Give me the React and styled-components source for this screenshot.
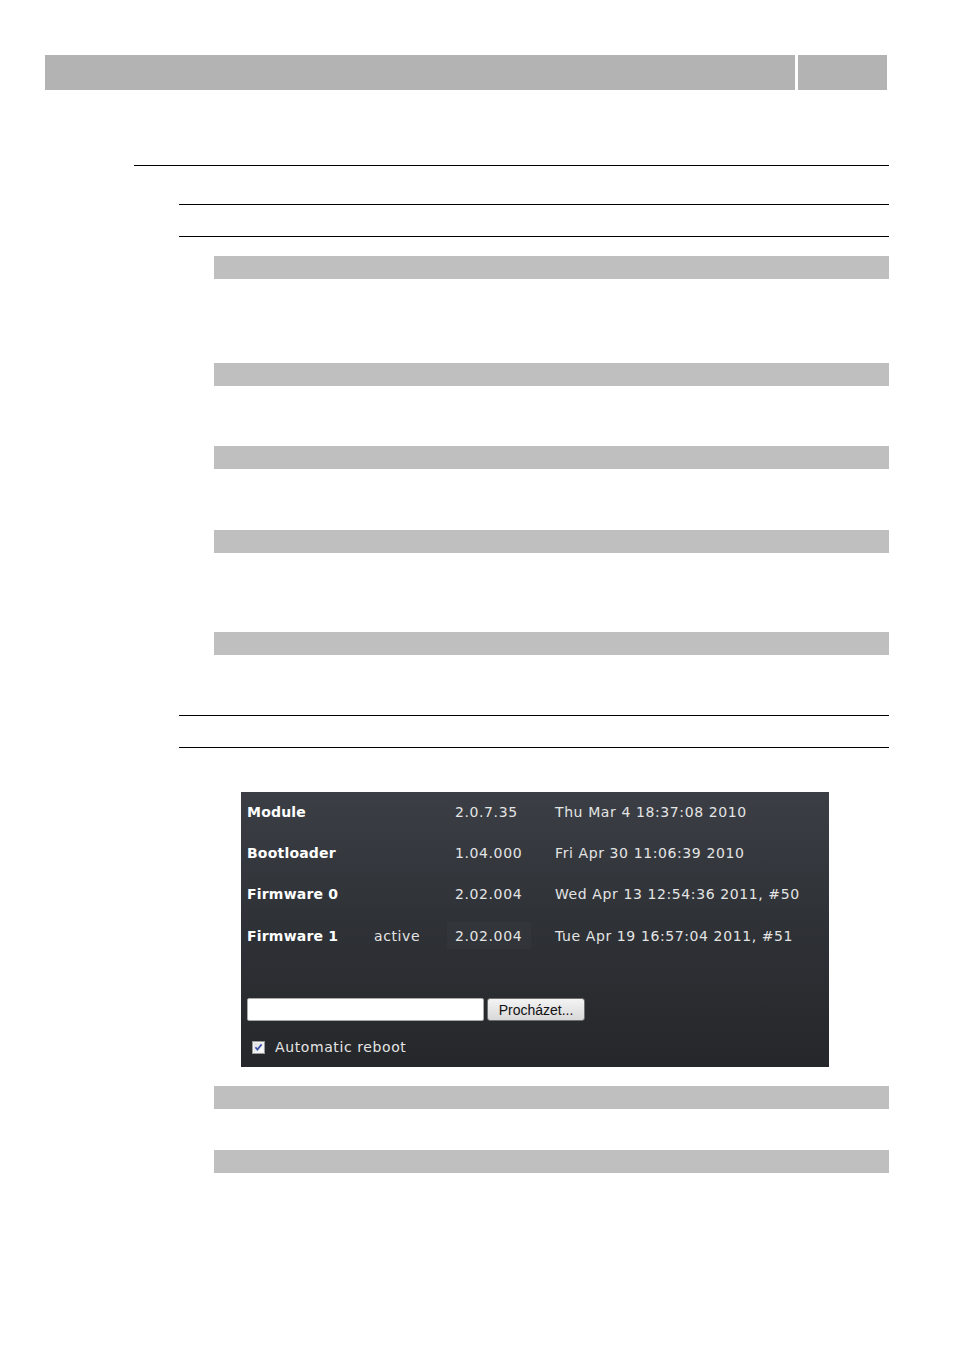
import React from "react";
import styled, { createGlobalStyle } from "styled-components";

const Global = createGlobalStyle`
  html, body { margin: 0; padding: 0; background: #ffffff; }
  body { font-family: "DejaVu Sans", Verdana, sans-serif; }
`;

const Page = styled.div`
  width: 954px;
  min-height: 1349px;
  background: #fff;
  padding-top: 55px;
  box-sizing: border-box;
`;

const Header = styled.div`
  display: flex;
  gap: 3px;
  margin-left: 45px;
  height: 35px;
`;

const HeaderBlock = styled.div`
  width: ${(p) => p.$w}px;
  height: 100%;
  background: #b3b3b3;
`;

const Content = styled.div`
  margin-left: ${(p) => p.$indent}px;
  width: ${(p) => 889 - p.$abs}px;
  display: flex;
  flex-direction: column;
`;

const Rule = styled.div`
  height: 1px;
  background: #000;
  margin-top: ${(p) => p.$mt}px;
`;

const Bar = styled.div`
  height: 23px;
  background: #bfbfbf;
  margin-top: ${(p) => p.$mt}px;
`;

const Panel = styled.div`
  margin-top: ${(p) => p.$mt}px;
  margin-left: 27px;
  width: 588px;
  height: 275px;
  box-sizing: border-box;
  padding: 0 0 0 6px;
  background: linear-gradient(180deg, #3b3f45 0%, #2f3237 45%, #25272a 100%);
  color: #e6e6e6;
  font-family: "DejaVu Sans", Verdana, sans-serif;
  font-size: 14px;
  letter-spacing: 0.6px;
  display: flex;
  flex-direction: column;
`;

const VersionTable = styled.div`
  display: grid;
  grid-template-columns: 127px 81px 100px 1fr;
  grid-auto-rows: 41.3px;
  align-items: center;
  margin-top: -1px;
`;

const Cell = styled.div`
  height: 100%;
  display: flex;
  align-items: center;
  white-space: nowrap;
  font-weight: ${(p) => (p.$bold ? "bold" : "normal")};
  color: ${(p) => (p.$bold ? "#ffffff" : "#e4e4e4")};
  letter-spacing: ${(p) => (p.$bold ? "0.2px" : "0.6px")};
`;

const HighlightCell = styled(Cell)`
  height: 27px;
  margin-left: -8px;
  padding-left: 8px;
  width: 84px;
  box-sizing: border-box;
  background: rgba(255, 255, 255, 0.025);
`;

const UploadRow = styled.div`
  margin-top: 42px;
  display: flex;
  align-items: center;
  gap: 3px;
`;

const FileInput = styled.div`
  width: 237px;
  height: 23px;
  box-sizing: border-box;
  background: #fff;
  border: 1px solid #a9a9a9;
  border-radius: 2px;
`;

const BrowseButton = styled.div`
  width: 98px;
  height: 23px;
  box-sizing: border-box;
  border: 1px solid #707070;
  border-radius: 3px;
  background: linear-gradient(180deg, #f4f4f4 0%, #e6e6e6 50%, #d8d8d8 100%);
  color: #111;
  font-family: "Liberation Sans", Arial, sans-serif;
  font-size: 14px;
  letter-spacing: 0;
  display: flex;
  align-items: center;
  justify-content: center;
`;

const CheckRow = styled.div`
  margin-top: 18px;
  margin-left: 5px;
  display: flex;
  align-items: center;
  gap: 10px;
  color: #e4e4e4;
`;

const Check = () => (
  <svg width="13" height="13" viewBox="0 0 13 13">
    <defs>
      <linearGradient id="cbg" x1="0" y1="0" x2="1" y2="1">
        <stop offset="0" stopColor="#dcdcdc" />
        <stop offset="1" stopColor="#ffffff" />
      </linearGradient>
    </defs>
    <rect x="0.5" y="0.5" width="12" height="12" fill="#f2f2f2" stroke="#9a9a9a" />
    <rect x="2" y="2" width="9" height="9" fill="url(#cbg)" />
    <path d="M3.5 6.3 L5.4 8.6 L9.6 3.4" fill="none" stroke="#3d55a8" strokeWidth="1.8" />
  </svg>
);

const rows = [
  { name: "Module", state: "", ver: "2.0.7.35", date: "Thu Mar 4 18:37:08 2010" },
  { name: "Bootloader", state: "", ver: "1.04.000", date: "Fri Apr 30 11:06:39 2010" },
  { name: "Firmware 0", state: "", ver: "2.02.004", date: "Wed Apr 13 12:54:36 2011, #50" },
  { name: "Firmware 1", state: "active", ver: "2.02.004", date: "Tue Apr 19 16:57:04 2011, #51", hl: true },
];

export default function App() {
  return (
    <Page>
      <Global />
      <Header>
        <HeaderBlock $w={750} />
        <HeaderBlock $w={89} />
      </Header>
      <Content $indent={134} $abs={134}>
        <Rule $mt={75} />
        <Content $indent={45} $abs={179}>
          <Rule $mt={38} />
          <Rule $mt={31} />
          <Content $indent={35} $abs={214}>
            <Bar $mt={19} />
            <Bar $mt={84} />
            <Bar $mt={60} />
            <Bar $mt={61} />
            <Bar $mt={79} />
          </Content>
          <Rule $mt={60} />
          <Rule $mt={31} />
          <Content $indent={35} $abs={214}>
            <Panel $mt={44}>
              <VersionTable>
                {rows.map((r) => (
                  <React.Fragment key={r.name}>
                    <Cell $bold>{r.name}</Cell>
                    <Cell>{r.state}</Cell>
                    {r.hl ? <HighlightCell>{r.ver}</HighlightCell> : <Cell>{r.ver}</Cell>}
                    <Cell>{r.date}</Cell>
                  </React.Fragment>
                ))}
              </VersionTable>
              <UploadRow>
                <FileInput />
                <BrowseButton>Procházet...</BrowseButton>
              </UploadRow>
              <CheckRow>
                <Check />
                <span>Automatic reboot</span>
              </CheckRow>
            </Panel>
            <Bar $mt={19} />
            <Bar $mt={41} />
          </Content>
        </Content>
      </Content>
    </Page>
  );
}
